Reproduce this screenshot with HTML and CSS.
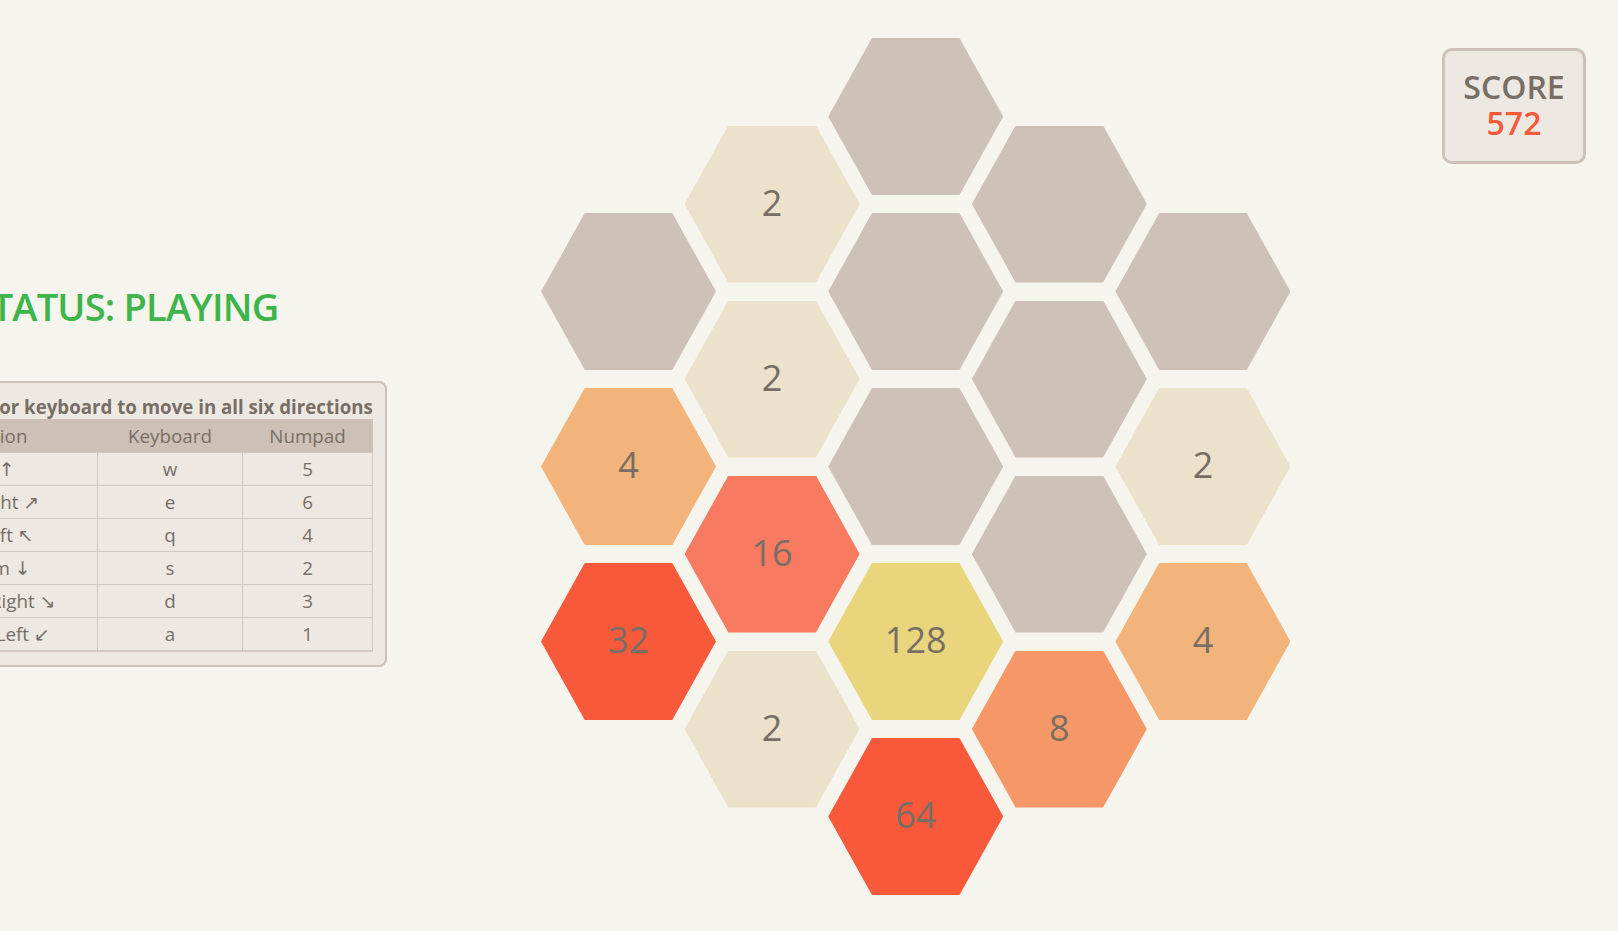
FILE: index.html
```html
<!DOCTYPE html>
<html>
<head>
    <title>Hex 2048</title>
    <link rel="stylesheet" href="styles.css">
</head>
<body>
    <div class="side">
        <h2 class="status">STATUS: PLAYING</h2>
        <div class="controls">
            <table>
                <caption>Use numpad or keyboard to move in all six directions</caption>
                <colgroup>
                    <col class="c-dir">
                    <col class="c-key">
                    <col class="c-num">
                </colgroup>
                <thead>
                    <tr><th>Direction</th><th>Keyboard</th><th>Numpad</th></tr>
                </thead>
                <tbody>
                    <tr><td>Top &#8593;</td><td>w</td><td>5</td></tr>
                    <tr><td>Top Right &#8599;</td><td>e</td><td>6</td></tr>
                    <tr><td>Top Left &#8598;</td><td>q</td><td>4</td></tr>
                    <tr><td>Bottom &#8595;</td><td>s</td><td>2</td></tr>
                    <tr><td>Bottom Right &#8600;</td><td>d</td><td>3</td></tr>
                    <tr><td>Bottom Left &#8601;</td><td>a</td><td>1</td></tr>
                </tbody>
            </table>
        </div>
    </div>

    <div class="board">
        <div class="col">
            <div class="hex"></div>
            <div class="hex t4">4</div>
            <div class="hex t32">32</div>
        </div>
        <div class="col">
            <div class="hex t2">2</div>
            <div class="hex t2">2</div>
            <div class="hex t16">16</div>
            <div class="hex t2">2</div>
        </div>
        <div class="col">
            <div class="hex"></div>
            <div class="hex"></div>
            <div class="hex"></div>
            <div class="hex t128">128</div>
            <div class="hex t64">64</div>
        </div>
        <div class="col">
            <div class="hex"></div>
            <div class="hex"></div>
            <div class="hex"></div>
            <div class="hex t8">8</div>
        </div>
        <div class="col">
            <div class="hex"></div>
            <div class="hex t2">2</div>
            <div class="hex t4">4</div>
        </div>
    </div>

    <div class="score">
        <div class="score-label">SCORE</div>
        <div class="score-value">572</div>
    </div>
</body>
</html>
```

FILE: styles.css
```css
/* Pagina */
body {
    margin: 0;
    height: 100vh;
    overflow: hidden;
    display: flex;
    align-items: flex-start;
    background-color: #f5f4ed;
    color: #776e65;
    font-family: "Open Sans", "DejaVu Sans", sans-serif;
}

/* Panel izquierdo */
.side {
    flex: none;
    width: 524px;
    margin-left: -137px;
    margin-top: 282px;
    text-align: center;
}

.status {
    margin: 0 0 51px;
    font-size: 38px;
    line-height: 48px;
    font-weight: 600;
    letter-spacing: -0.8px;
    color: #3db54b;
}

.controls {
    border: 2px solid #cdc1b7;
    border-radius: 8px;
    background-color: #ede8e2;
    padding: 12px 12px 13px;
}

table {
    width: 100%;
    border-collapse: collapse;
    font-size: 18.8px;
}

caption {
    font-size: 18.7px;
    font-weight: 700;
    line-height: 24px;
    white-space: nowrap;
}

.c-dir { width: 220px; }
.c-key { width: 145px; }
.c-num { width: 130px; }

th, td {
    padding: 0;
    text-align: center;
}

th {
    height: 33px;
    background-color: #cdc1b7;
    font-weight: normal;
}

td {
    height: 32px;
    border: 1px solid #d3c8bf;
}

tbody tr:last-child td {
    border-bottom-width: 2px;
}

/* Tablero */
.board {
    flex: none;
    display: flex;
    align-items: center;
    margin-left: 154px;
    margin-top: 38px;
}

.col {
    display: flex;
    flex-direction: column;
    gap: 18px;
}

.col + .col {
    margin-left: -31.4px;
}

.hex {
    width: 175px;
    height: 157px;
    box-sizing: border-box;
    padding-bottom: 4px;
    clip-path: polygon(25% 0, 75% 0, 100% 50%, 75% 100%, 25% 100%, 0 50%);
    background-color: #cec1b8;
    display: flex;
    align-items: center;
    justify-content: center;
    font-size: 36px;
}

.t2 { background-color: #ece1ca; }
.t4 { background-color: #f2b47b; }
.t8 { background-color: #f59766; }
.t16 { background-color: #f77a61; }
.t32 { background-color: #f8593b; }
.t64 { background-color: #f8593b; }
.t128 { background-color: #e9d57b; }

/* Puntaje */
.score {
    flex: none;
    width: 144px;
    box-sizing: border-box;
    margin: 48px 32px 0 auto;
    padding: 18px 0 20px;
    border: 3px solid #cdc1b7;
    border-radius: 10px;
    background-color: #ede8e2;
    text-align: center;
    font-size: 32px;
    line-height: 36px;
    font-weight: 600;
}

.score-value {
    color: #f65a3b;
}
```
